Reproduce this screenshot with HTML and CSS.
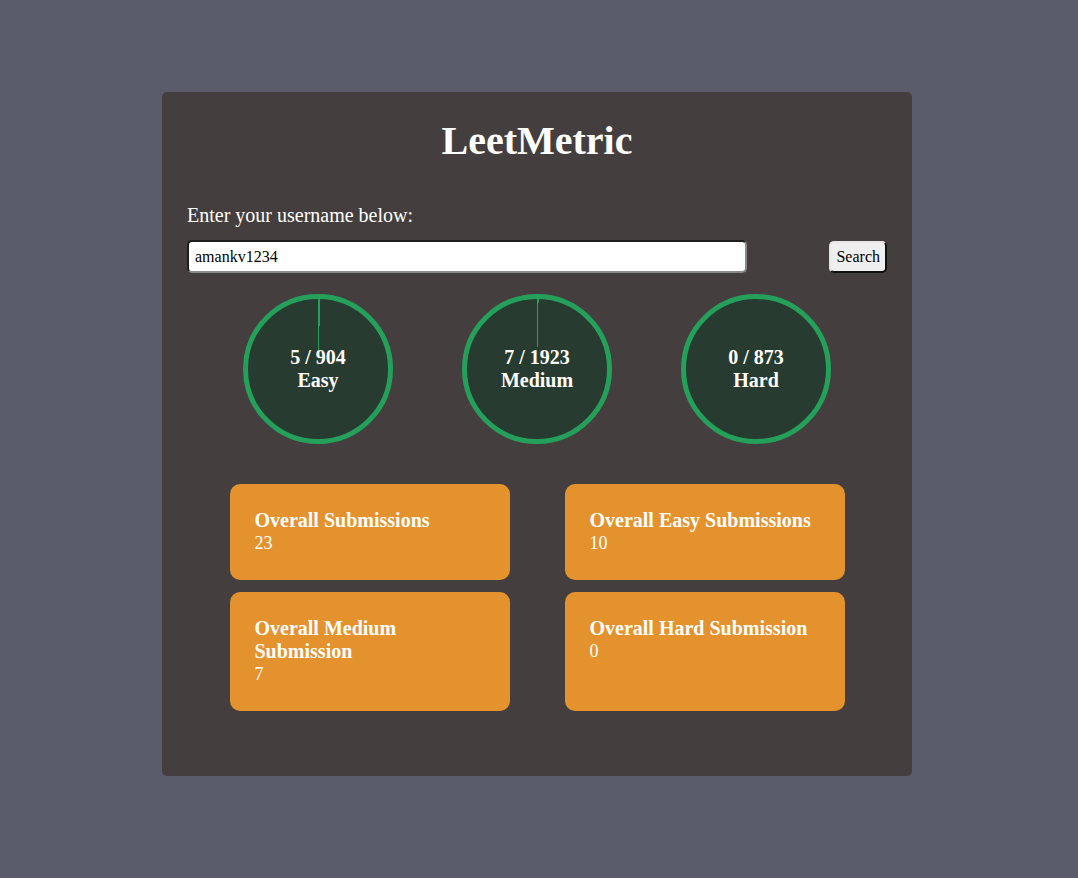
FILE: index.html
```html
<!DOCTYPE html>
<html lang="en">
<head>
<meta charset="UTF-8">
<title>LeetMetric</title>
<link rel="stylesheet" href="styles.css">
</head>
<body>
  <div class="container">
    <h1 class="title">LeetMetric</h1>
    <div class="user-container">
      <p class="label">Enter your username below:</p>
      <div class="user-input">
        <input class="search-input" type="text" value="amankv1234">
        <button class="search-btn">Search</button>
      </div>
    </div>
    <div class="stats">
      <div class="progress">
        <div class="circle" style="--progress: 0.553%">
          <span>5 / 904</span>
          <span>Easy</span>
        </div>
        <div class="circle" style="--progress: 0.364%">
          <span>7 / 1923</span>
          <span>Medium</span>
        </div>
        <div class="circle" style="--progress: 0%">
          <span>0 / 873</span>
          <span>Hard</span>
        </div>
      </div>
      <div class="cards">
        <div class="card">
          <h4 class="card-title">Overall Submissions</h4>
          <p class="card-value">23</p>
        </div>
        <div class="card">
          <h4 class="card-title">Overall Easy Submissions</h4>
          <p class="card-value">10</p>
        </div>
        <div class="card">
          <h4 class="card-title">Overall Medium Submission</h4>
          <p class="card-value">7</p>
        </div>
        <div class="card">
          <h4 class="card-title">Overall Hard Submission</h4>
          <p class="card-value">0</p>
        </div>
      </div>
    </div>
  </div>
</body>
</html>
```

FILE: styles.css
```css
* {
  box-sizing: border-box;
}

html, body {
  margin: 0;
  padding: 0;
}

body {
  background: #5b5c6b;
  font-family: "Liberation Serif", "Times New Roman", serif;
  color: #ffffff;
  min-height: 878px;
  display: flex;
  justify-content: center;
  align-items: flex-start;
  padding: 92px 4px 0 0;
}

.container {
  width: 750px;
  background: #443f3e;
  border-radius: 5px;
  padding: 26px 25px 65px 25px;
  display: flex;
  flex-direction: column;
}

.title {
  margin: 0;
  font-size: 40px;
  line-height: 46px;
  font-weight: bold;
  text-align: center;
}

.user-container {
  margin-top: 40px;
  display: flex;
  flex-direction: column;
  gap: 14px;
}

.label {
  margin: 0;
  font-size: 20px;
  line-height: 22px;
}

.user-input {
  display: flex;
  justify-content: space-between;
  align-items: center;
}

.search-input {
  width: 80%;
  height: 33px;
  padding: 0 6px;
  font-family: "Liberation Serif", "Times New Roman", serif;
  font-size: 16px;
  color: #000;
  background: #ffffff;
  border-width: 2px;
  border-style: solid;
  border-color: #1e1e1e #8a8a8a #8a8a8a #1e1e1e;
  border-radius: 5px;
  outline: none;
}

.search-btn {
  height: 32px;
  padding: 0 5px;
  font-family: "Liberation Serif", "Times New Roman", serif;
  font-size: 16px;
  color: #000;
  background: #efefef;
  border-width: 2px;
  border-style: solid;
  border-color: #e6e6e6 #111111 #111111 #e6e6e6;
  border-radius: 5px;
  margin-top: 1px;
}

.stats {
  margin-top: 21px;
  display: flex;
  flex-direction: column;
  gap: 40px;
}

.progress {
  display: flex;
  justify-content: center;
  gap: 69px;
}

.circle {
  width: 150px;
  height: 150px;
  border-radius: 50%;
  border: 5px solid #25a05b;
  background: conic-gradient(#25a05b 0 var(--progress), #283b30 var(--progress) 100%);
  display: flex;
  flex-direction: column;
  justify-content: center;
  align-items: center;
  font-size: 20px;
  font-weight: bold;
  line-height: 23px;
  color: #ffffff;
}

.cards {
  display: grid;
  grid-template-columns: 280px 280px;
  justify-content: center;
  column-gap: 55px;
  row-gap: 12px;
}

.card {
  background: #e4922d;
  border-radius: 10px;
  padding: 25px;
  color: #ffffff;
}

.card-title {
  margin: 0;
  font-size: 20px;
  line-height: 23px;
  font-weight: bold;
}

.card-value {
  margin: 0;
  font-size: 18px;
  line-height: 23px;
}
```
